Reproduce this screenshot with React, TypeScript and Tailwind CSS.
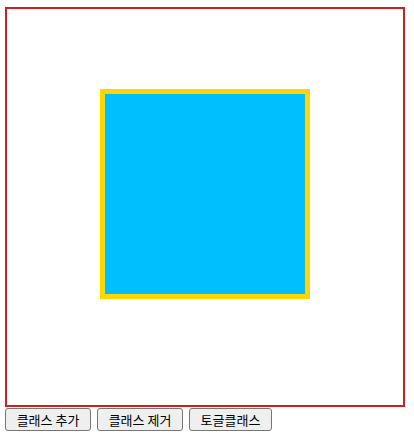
import React from "react";

export default function App() {
  const btn =
    "h-[23px] flex items-center justify-center bg-[#efefef] border border-[#767676] rounded-[3px] text-[13px] leading-none text-black px-[6px]";
  return (
    <div className="w-[414px] h-[435px] bg-white pl-[5px] pt-[7px]" style={{ fontFamily: '"Noto Sans CJK KR", "Noto Sans", sans-serif' }}>
      <div className="w-[400px] h-[400px] border-2 border-[#d01e1e]">
        <div className="ml-[93px] mt-[80px] w-[210px] h-[210px] border-[5px] border-[#ffd700] bg-[#00bfff]" />
      </div>
      <div className="flex gap-[6px] mt-[1px]">
        <button className={`${btn} w-[86px]`}>클래스 추가</button>
        <button className={`${btn} w-[86px]`}>클래스 제거</button>
        <button className={`${btn} w-[83px]`}>토글클래스</button>
      </div>
    </div>
  );
}
